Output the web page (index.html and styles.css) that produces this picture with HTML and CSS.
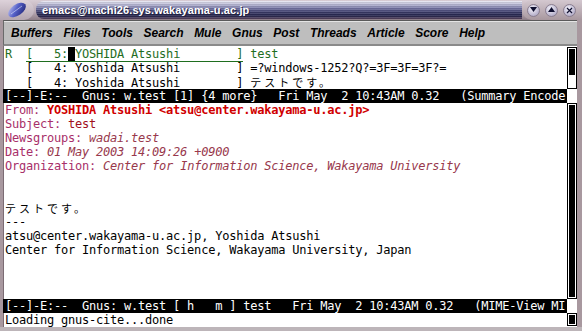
FILE: index.html
```html
<!DOCTYPE html>
<html lang="en">
<head>
  <meta charset="UTF-8">
  <title>emacs@nachi26.sys.wakayama-u.ac.jp</title>
  <link rel="stylesheet" href="styles.css">
</head>
<body>
  <div class="frame">
    <div class="titlebar">
      <div class="tb-left">
        <svg class="tb-icon" width="22" height="16" viewBox="0 0 22 16">
          <defs>
            <linearGradient id="gem" x1="0" y1="0" x2="1" y2="1">
              <stop offset="0" stop-color="#c8ccf4"/>
              <stop offset="0.45" stop-color="#5560c8"/>
              <stop offset="1" stop-color="#1c2070"/>
            </linearGradient>
          </defs>
          <ellipse cx="11" cy="8" rx="10" ry="5.5" transform="rotate(-35 11 8)" fill="url(#gem)"/>
          <path d="M5 12 L16 4" stroke="#e8ecff" stroke-width="0.8" opacity="0.7"/>
        </svg>
      </div>
      <div class="tb-bar">
        <span class="tb-title">emacs@nachi26.sys.wakayama-u.ac.jp</span>
      </div>
      <div class="tb-buttons">
        <span class="tb-btn"><svg width="7" height="6" viewBox="0 0 7 6"><path d="M0 0 H7 L3.5 5 Z" fill="#101030"/></svg></span>
        <span class="tb-btn"><svg width="7" height="6" viewBox="0 0 7 6"><path d="M0 5 H7 L3.5 0 Z" fill="#101030"/></svg></span>
        <span class="tb-btn"><svg width="7" height="7" viewBox="0 0 7 7"><path d="M1 1 L6 6 M6 1 L1 6" stroke="#101030" stroke-width="1.2"/></svg></span>
      </div>
    </div>

    <div class="menubar">
      <span>Buffers</span><span>Files</span><span>Tools</span><span>Search</span><span>Mule</span><span>Gnus</span><span>Post</span><span>Threads</span><span>Article</span><span>Score</span><span>Help</span>
    </div>

    <div class="screen">
      <div class="win win-summary">
        <div class="pane">
          <div class="line current">R  <span class="box">[   5:<span class="cursor"> </span>YOSHIDA Atsushi        ]</span> test</div>
          <div class="line">   [   4: Yoshida Atsushi        ] =?windows-1252?Q?=3F=3F=3F?=</div>
          <div class="line">   [   4: Yoshida Atsushi        ] <span class="ja">テストです。</span></div>
        </div>
        <div class="sbar"><div class="thumb thumb-top"></div></div>
      </div>
      <div class="win">
        <div class="pane"><div class="modeline">[--]-E:--  Gnus: w.test [1] {4 more}   Fri May  2 10:43AM 0.32   (Summary Encode</div></div>
        <div class="sgap"></div>
      </div>

      <div class="win win-article">
        <div class="pane">
          <div class="line"><span class="hname">From: </span><span class="hfrom">YOSHIDA Atsushi &lt;atsu@center.wakayama-u.ac.jp&gt;</span></div>
          <div class="line"><span class="hname">Subject: </span><span class="hsubj">test</span></div>
          <div class="line"><span class="hname">Newsgroups: </span><span class="hval">wadai.test</span></div>
          <div class="line"><span class="hname">Date: </span><span class="hval">01 May 2003 14:09:26 +0900</span></div>
          <div class="line"><span class="hname">Organization: </span><span class="hval">Center for Information Science, Wakayama University</span></div>
          <div class="line"> </div>
          <div class="line"> </div>
          <div class="line"><span class="ja">テストです。</span></div>
          <div class="line">---</div>
          <div class="line">atsu@center.wakayama-u.ac.jp, Yoshida Atsushi</div>
          <div class="line">Center for Information Science, Wakayama University, Japan</div>
          <div class="line"> </div>
          <div class="line"> </div>
          <div class="line"> </div>
        </div>
        <div class="sbar"><div class="thumb thumb-full"></div></div>
      </div>
      <div class="win">
        <div class="pane"><div class="modeline">[--]-E:--  Gnus: w.test [ h   m ] test   Fri May  2 10:43AM 0.32   (MIME-View MI</div></div>
        <div class="sgap"></div>
      </div>

      <div class="win win-echo">
        <div class="pane"><div class="line">Loading gnus-cite...done</div></div>
        <div class="sbar"><div class="thumb thumb-full"></div></div>
      </div>
    </div>
  </div>
</body>
</html>
```

FILE: styles.css
```css
* {
  box-sizing: border-box;
}
body {
  margin: 0;
  width: 582px;
  height: 331px;
  overflow: hidden;
  background-color: #b4aab0;
}
.frame {
  width: 582px;
  height: 331px;
  background-color: #a8989f;
  border-bottom: 4px solid #bdb5b9;
}

/* window manager title */
.titlebar {
  height: 20px;
  display: flex;
  align-items: center;
  background: linear-gradient(#d8ccd4, #b8a8b2 60%, #8c7c86);
}
.tb-left {
  width: 34px;
  height: 20px;
  display: flex;
  align-items: center;
  padding-left: 6px;
  background: linear-gradient(#ddd2da, #b4a6b0);
  border-radius: 0 10px 10px 0;
}
.tb-bar {
  flex: 1;
  height: 18px;
  margin-left: 2px;
  border-radius: 8px 0 0 8px;
  display: flex;
  align-items: center;
  padding-left: 6px;
  background:
    repeating-linear-gradient(rgba(255,255,255,0.12) 0 1px, rgba(0,0,0,0.08) 1px 2px),
    linear-gradient(#eaeaf4 0%, #b0b0d0 22%, #7070a0 42%, #3a3a68 62%, #22224a 82%, #5a4660 100%);
}
.tb-title {
  font-family: "Liberation Sans", Arial, sans-serif;
  font-weight: bold;
  font-size: 11px;
  letter-spacing: 0.1px;
  color: #ffffff;
  text-shadow: 1px 1px 0 #202040;
}
.tb-buttons {
  width: 60px;
  height: 20px;
  display: flex;
  align-items: center;
  justify-content: flex-end;
  gap: 5px;
  padding-right: 6px;
  background: linear-gradient(#d4c8d0, #a8989f);
  border-radius: 10px 0 0 10px;
}
.tb-btn {
  width: 13px;
  height: 13px;
  border-radius: 50%;
  display: flex;
  align-items: center;
  justify-content: center;
  background: radial-gradient(circle at 40% 35%, #f4f2fa, #b8b2cc 70%, #8a84a0);
  border: 1px solid #8a7e90;
}

/* emacs menu */
.menubar {
  height: 26px;
  margin-left: 3px;
  margin-right: 5px;
  display: flex;
  align-items: center;
  gap: 10.6px;
  padding: 1px 0 0 7px;
  background-color: #bebebe;
  border-top: 1px solid #5a5a5a;
  border-left: 1px solid #6a6a6a;
  border-bottom: 2px solid #8a8a8a;
  box-shadow: inset 0 1px 0 #e4e4e4;
  font-family: "Liberation Sans", Arial, sans-serif;
  font-size: 12px;
  font-weight: bold;
  font-style: italic;
  color: #000;
}

/* text area */
.screen {
  margin-left: 3px;
  margin-right: 5px;
  padding-top: 1px;
  background-color: #fff;
  border-left: 1px solid #7c6c74;
  font-family: "DejaVu Sans Mono", monospace;
  font-size: 12px;
  letter-spacing: -0.22px;
  color: #000;
}
.win {
  display: flex;
}
.pane {
  width: 562px;
  padding-left: 1px;
}
.line, .modeline {
  height: 14px;
  line-height: 14px;
  white-space: pre;
}
.modeline {
  background-color: #000;
  color: #fff;
  margin-left: -2px;
  padding-left: 2px;
  width: 564px;
}
.current {
  color: #1f6e1f;
}
.box {
  border-bottom: 1px solid #1f6e1f;
}
.cursor {
  background-color: #000;
}
.ja {
  font-family: "Noto Sans CJK JP", sans-serif;
  font-size: 11px;
  line-height: 14px;
  letter-spacing: 3px;
}
.hname {
  color: #a8306a;
}
.hfrom {
  color: #d00000;
  font-weight: bold;
}
.hsubj {
  color: #a01020;
}
.hval {
  color: #98384c;
  font-style: italic;
}

/* scroll bars */
.sbar {
  width: 10px;
  margin-left: 1px;
  border: 1px solid #000;
  padding: 1px;
  background-color: #fff;
}
.sgap {
  width: 10px;
  margin-left: 1px;
}
.thumb {
  background-color: #000;
}
.thumb-top {
  height: 26px;
}
.thumb-full {
  height: 100%;
}
.win-echo .sbar {
  height: 13px;
}
```
